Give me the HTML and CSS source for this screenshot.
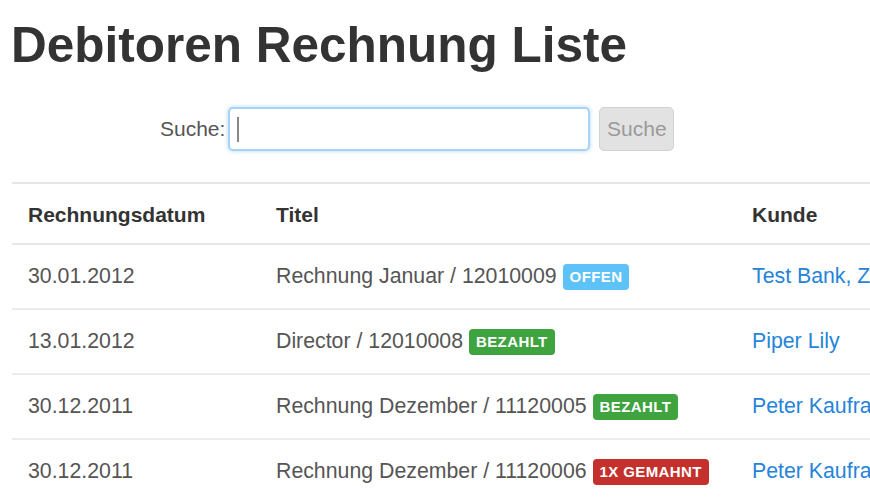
FILE: index.html
```html
<!DOCTYPE html>
<html lang="de">
<head>
<meta charset="utf-8">
<title>Debitoren Rechnung Liste</title>
<link rel="stylesheet" href="styles.css">
</head>
<body>
<div class="page">
  <h1 class="title">Debitoren Rechnung Liste</h1>
  <form class="search">
    <label class="search-label" for="q">Suche:</label>
    <span class="search-field">
      <input id="q" class="search-input" type="text">
      <span class="caret"></span>
    </span>
    <button class="search-btn" type="button" disabled>Suche</button>
  </form>
  <div class="table-wrap">
    <table class="invoices">
      <colgroup>
        <col class="c-date">
        <col class="c-title">
        <col class="c-customer">
      </colgroup>
      <thead>
        <tr><th>Rechnungsdatum</th><th>Titel</th><th>Kunde</th></tr>
      </thead>
      <tbody>
        <tr>
          <td>30.01.2012</td>
          <td>Rechnung Januar / 12010009 <span class="badge badge-info">Offen</span></td>
          <td><a href="#">Test Bank, Zürich</a></td>
        </tr>
        <tr>
          <td>13.01.2012</td>
          <td>Director / 12010008 <span class="badge badge-success">Bezahlt</span></td>
          <td><a href="#">Piper Lily</a></td>
        </tr>
        <tr>
          <td>30.12.2011</td>
          <td>Rechnung Dezember / 11120005 <span class="badge badge-success">Bezahlt</span></td>
          <td><a href="#">Peter Kaufrath</a></td>
        </tr>
        <tr>
          <td>30.12.2011</td>
          <td>Rechnung Dezember / 11120006 <span class="badge badge-danger">1x gemahnt</span></td>
          <td><a href="#">Peter Kaufrath</a></td>
        </tr>
      </tbody>
    </table>
  </div>
</div>
</body>
</html>
```

FILE: styles.css
```css
html, body {
  margin: 0;
  padding: 0;
  background: #fff;
  overflow: hidden;
}

body {
  font-family: "Liberation Sans", Arial, Helvetica, sans-serif;
  font-size: 21px;
  color: #555;
}

.page {
  padding: 0 0 0 12px;
}

.title {
  margin: 15px 0 0 -1px;
  font-size: 49.5px;
  line-height: 60px;
  font-weight: bold;
  color: #333;
}

.search {
  display: flex;
  align-items: center;
  margin: 32px 0 0 148px;
  height: 44px;
}

.search-label {
  color: #555;
  margin-right: 3px;
}

.search-field {
  position: relative;
  display: block;
}

.search-input {
  display: block;
  box-sizing: border-box;
  width: 362px;
  height: 44px;
  margin: 0;
  padding: 0 9px;
  border: 2px solid #a9d3f5;
  border-radius: 5px;
  background: #fff;
  box-shadow: 0 0 4px rgba(82, 168, 236, 0.45);
  font: inherit;
  outline: none;
}

.caret {
  position: absolute;
  left: 9px;
  top: 10px;
  width: 2px;
  height: 25px;
  background: #888;
}

.search-btn {
  box-sizing: border-box;
  width: 75px;
  height: 44px;
  margin-left: 9px;
  padding: 0;
  border: 1px solid #d2d2d2;
  border-radius: 5px;
  background: #e2e2e2;
  color: #9a9a9a;
  font: inherit;
}

.table-wrap {
  margin-top: 31px;
  overflow: hidden;
}

.invoices {
  width: 1100px;
  border-collapse: collapse;
  table-layout: fixed;
}

.c-date { width: 248px; }
.c-title { width: 476px; }

.invoices th,
.invoices td {
  text-align: left;
  line-height: 31px;
  vertical-align: middle;
  white-space: nowrap;
}

.invoices th {
  padding: 15px 16px 13px;
  border-top: 2px solid #e6e6e6;
  border-bottom: 2px solid #e6e6e6;
  font-weight: bold;
  color: #333;
}

.invoices td {
  padding: 16px 16px 16px;
  border-top: 2px solid #ececec;
  font-size: 21.3px;
}

.invoices tbody tr:first-child td {
  border-top: 0;
}

.invoices a {
  color: #2584d9;
  text-decoration: none;
}

.badge {
  display: inline-block;
  vertical-align: 1px;
  padding: 0 7px;
  height: 26px;
  line-height: 26px;
  border-radius: 4px;
  font-size: 15px;
  font-weight: bold;
  letter-spacing: 0.4px;
  text-transform: uppercase;
  color: #fff;
}

.badge-info { background: #5cc2f7; }
.badge-success { background: #3fa33f; }
.badge-danger { background: #c4312c; }
```
